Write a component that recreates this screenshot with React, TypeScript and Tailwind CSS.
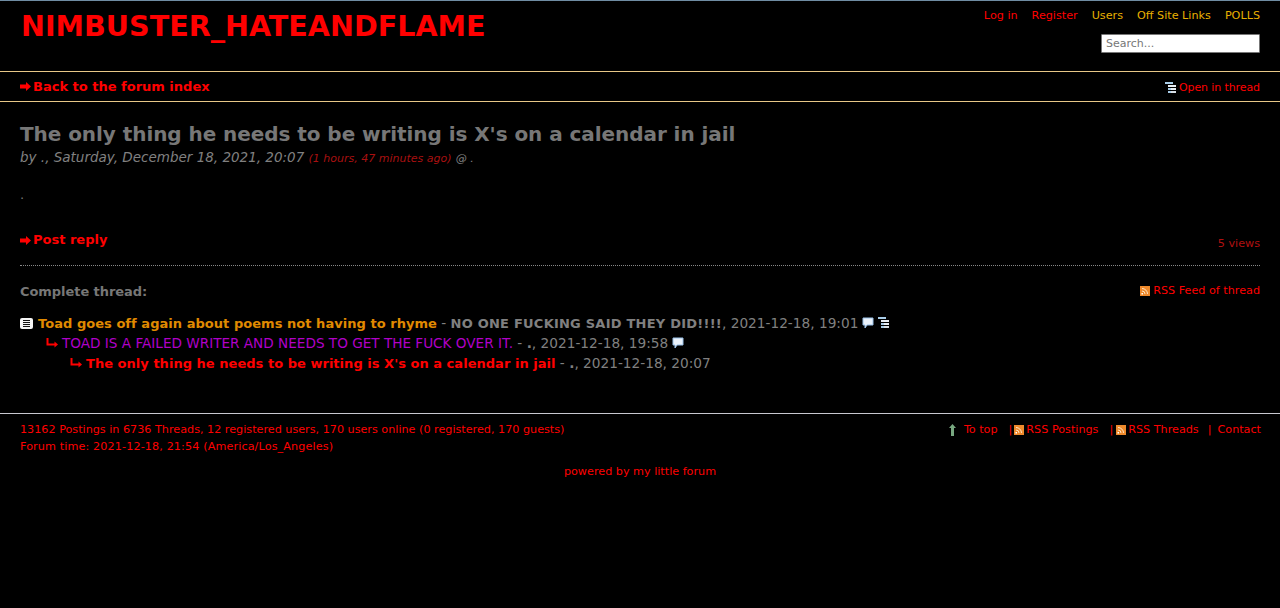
const F = "font-['DejaVu_Sans',Verdana,sans-serif]";

const Arrow = () => (
  <svg width="11" height="9" viewBox="0 0 11 9" className="shrink-0"><path d="M0 2.5h6V0l5 4.5L6 9V6.5H0z" fill="#ff0000" /></svg>
);
const ThreadIcon = () => (
  <svg width="11" height="11" viewBox="0 0 11 11" className="shrink-0">
    <rect x="0" y="0" width="8" height="2" fill="#a8cce8" /><rect x="3" y="3" width="8" height="2" fill="#e8eef4" />
    <rect x="3" y="6" width="8" height="2" fill="#a8cce8" /><rect x="6" y="6" width="5" height="2" fill="#e8eef4" />
    <rect x="3" y="9" width="8" height="2" fill="#a8cce8" /><rect x="6" y="9" width="5" height="2" fill="#d8dfe6" />
  </svg>
);
const Rss = () => (
  <svg width="10" height="10" viewBox="0 0 10 10" className="shrink-0">
    <rect width="10" height="10" fill="#ee8a2c" />
    <path d="M2 2.5a5.5 5.5 0 0 1 5.5 5.5M2 5a3 3 0 0 1 3 3" stroke="#ffe4c4" strokeWidth="1" fill="none" />
    <rect x="1.5" y="7" width="1.5" height="1.5" fill="#fff" />
  </svg>
);
const Bubble = () => (
  <svg width="12" height="12" viewBox="0 0 12 12" className="shrink-0">
    <path d="M1 1h10v7H5l-2 3V8H1z" fill="#eaf2fb" stroke="#98c0e8" strokeWidth="1" />
  </svg>
);
const Reply = () => (
  <svg width="12" height="10" viewBox="0 0 12 10" className="shrink-0">
    <path d="M1.5 0v6.5H9" stroke="#ff0000" strokeWidth="2" fill="none" />
    <path d="M8.5 3.5 12 6.5 8.5 9.5z" fill="#ff0000" />
  </svg>
);
const Up = () => (
  <svg width="7" height="12" viewBox="0 0 7 12" className="shrink-0">
    <path d="M3.5 0 7 4H5v8H2V4H0z" fill="#78a880" />
  </svg>
);
const ListBox = () => (
  <svg width="13" height="11" viewBox="0 0 13 11" className="shrink-0">
    <rect width="13" height="11" rx="2" fill="#f4f4f4" />
    <path d="M3 2.5h7M3 4.5h7M3 6.5h7M3 8.5h7" stroke="#111" strokeWidth="1" />
  </svg>
);

export default function App() {
  return (
    <div className={`${F} min-h-[608px] bg-black text-[11.2px] text-[#ff0000] border-t border-[#6f8ca3]`}>
      <header className="flex justify-between h-[70px] pl-[20px] pr-[20px]">
        <h1 className="text-[28.6px] leading-[34px] font-bold mt-[8px] ml-[1px]">NIMBUSTER_HATEANDFLAME</h1>
        <div className="flex flex-col items-end">
          <nav className="flex gap-[14px] mt-[8px] leading-[14px]">
            <span>Log in</span><span>Register</span>
            <span className="text-[#e8b000]">Users</span><span className="text-[#e8b000]">Off Site Links</span><span className="text-[#e8b000]">POLLS</span>
          </nav>
          <input placeholder="Search..." className="mt-[11px] w-[159px] h-[19px] bg-white border border-[#777] px-[4px] text-[11px] text-black placeholder:text-[#777] rounded-[1px]" />
        </div>
      </header>
      <div className="flex justify-between items-center h-[31px] px-[20px] border-y border-[#e8c888]">
        <span className="flex items-center gap-[2px] text-[13px] font-bold"><Arrow />Back to the forum index</span>
        <span className="flex items-center gap-[3px] pt-[4px] text-[11px] tracking-[-0.1px]"><span className="-mt-[3px]"><ThreadIcon /></span>Open in thread</span>
      </div>
      <main className="px-[20px]">
        <h2 className="text-[20px] leading-[26px] font-bold text-[#777777] mt-[19px] mb-[1px] tracking-[-0.06px]">The only thing he needs to be writing is X's on a calendar in jail</h2>
        <p className="text-[13.5px] leading-[18px] italic text-[#808080]">by ., Saturday, December 18, 2021, 20:07 <span className="text-[11px] text-[#a81010]">(1 hours, 47 minutes ago)</span> <span className="text-[11px]">@ .</span></p>
        <p className="mt-[19px] leading-[16px] text-[13px] text-[#777]">.</p>
        <div className="flex justify-between items-end mt-[28px] pb-[7px] border-b border-dotted border-[#888]">
          <span className="flex items-center gap-[2px] text-[13px] font-bold leading-[18px] mb-[9px]"><Arrow />Post reply</span>
          <span className="text-[#b01010] leading-[14px] mb-[7px]">5 views</span>
        </div>
        <div className="flex justify-between items-center mt-[17px]">
          <span className="text-[13px] font-bold text-[#777] leading-[18px] tracking-[-0.06px]">Complete thread:</span>
          <span className="flex items-center gap-[3px] -mt-[2px]"><Rss />RSS Feed of thread</span>
        </div>
        <ul className="mt-[12px] text-[13.7px] leading-[20px] pb-[40px]">
          <li className="flex items-center gap-[4px] whitespace-pre h-[20px]">
            <span className="mr-[1px]"><ListBox /></span>
            <span><b className="text-[13px] tracking-[0.04px] text-[#e08a00]">Toad goes off again about poems not having to rhyme</b><span className="text-[#808080]"> - <b className="text-[13px] tracking-[0.23px]">NO ONE FUCKING SAID THEY DID!!!!</b>, 2021-12-18, 19:01</span></span>
            <span className="-mt-[1px]"><Bubble /></span><span className="-mt-[1px]"><ThreadIcon /></span>
          </li>
          <li className="flex items-center gap-[4px] pl-[26px] whitespace-pre h-[20px]">
            <Reply />
            <span><span className="text-[13.6px] text-[#b000c8]">TOAD IS A FAILED WRITER AND NEEDS TO GET THE FUCK OVER IT.</span><span className="text-[#808080]"> - <b>.</b>, 2021-12-18, 19:58</span></span>
            <span className="-mt-[1px]"><Bubble /></span>
          </li>
          <li className="flex items-center gap-[4px] pl-[50px] whitespace-pre h-[20px]">
            <Reply />
            <span><b className="text-[13px] tracking-[0.03px]">The only thing he needs to be writing is X's on a calendar in jail</b><span className="text-[#808080]"> - <b>.</b>, 2021-12-18, 20:07</span></span>
          </li>
        </ul>
      </main>
      <footer className="border-t border-[#c8c8d0] px-[20px] pt-[7px] leading-[17px]">
        <div className="flex justify-between">
          <div>
            <p>13162 Postings in 6736 Threads, 12 registered users, 170 users online (0 registered, 170 guests)</p>
            <p className="tracking-[0.12px]">Forum time: 2021-12-18, 21:54 (America/Los_Angeles)</p>
          </div>
          <div className="flex items-center h-[17px] gap-[2px] -mr-[1px]">
            <Up /><span className="ml-[6px] mr-[9px]">To top</span><span>|</span><Rss /><span className="mr-[9px]">RSS Postings</span><span className="mr-[1px]">|</span><Rss /><span className="mr-[7px]">RSS Threads</span><span>|</span><span className="ml-[4px]">Contact</span>
          </div>
        </div>
        <p className="text-center mt-[8px]">powered by my little forum</p>
      </footer>
    </div>
  );
}
